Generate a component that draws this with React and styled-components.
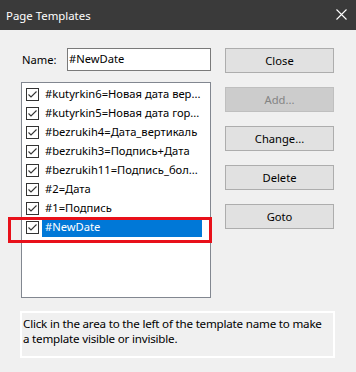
import React from "react"
import styled, { createGlobalStyle } from "styled-components"

const GlobalStyle = createGlobalStyle`
  html, body {
    margin: 0;
    padding: 0;
    background: #f0f0f0;
  }
  body {
    font-family: "Noto Sans", "Liberation Sans", sans-serif;
    font-size: 11.2px;
    color: #000;
  }
`

const templates = [
  "#kutyrkin6=Новая дата вер...",
  "#kutyrkin5=Новая дата гор...",
  "#bezrukih4=Дата_вертикаль",
  "#bezrukih3=Подпись+Дата",
  "#bezrukih11=Подпись_бол...",
  "#2=Дата",
  "#1=Подпись",
  "#NewDate",
]

const buttons = [
  { label: "Close" },
  { label: "Add...", disabled: true },
  { label: "Change..." },
  { label: "Delete" },
  { label: "Goto" },
]

const CheckIcon = () => (
  <svg width="13" height="13" viewBox="0 0 13 13">
    <rect x="0.5" y="0.5" width="12" height="12" fill="#fff" stroke="#333" />
    <path d="M2.5 6.5 L5 9 L10.5 3.5" fill="none" stroke="#333" strokeWidth="1.1" />
  </svg>
)

const CloseIcon = () => (
  <svg width="11" height="11" viewBox="0 0 11 11">
    <path d="M0.5 0.5 L10.5 10.5 M10.5 0.5 L0.5 10.5" stroke="#fff" strokeWidth="1.1" />
  </svg>
)

const App = () => (
  <Window>
    <GlobalStyle />
    <TitleBar>
      <span>Page Templates</span>
      <CloseIcon />
    </TitleBar>
    <Body>
      <Main>
        <LeftColumn>
          <NameRow>
            <label>Name:</label>
            <NameInput defaultValue="#NewDate" />
          </NameRow>
          <ListBox>
            {templates.map((name, i) => {
              const selected = i === templates.length - 1
              return (
                <Row key={name}>
                  <CheckIcon />
                  <RowText $selected={selected}>{name}</RowText>
                  {selected && <Marker />}
                </Row>
              )
            })}
          </ListBox>
        </LeftColumn>
        <ButtonColumn>
          {buttons.map((b) => (
            <Button key={b.label} disabled={b.disabled}>
              {b.label}
            </Button>
          ))}
        </ButtonColumn>
      </Main>
      <InfoBox>
        Click in the area to the left of the template name to make
        <br />
        a template visible or invisible.
      </InfoBox>
    </Body>
  </Window>
)

const Window = styled.div`
  width: 356px;
  height: 372px;
  display: flex;
  flex-direction: column;
  background: #f0f0f0;
  overflow: hidden;
`

const TitleBar = styled.div`
  height: 30px;
  flex-shrink: 0;
  background: #3a3a3a;
  color: #fff;
  display: flex;
  align-items: center;
  justify-content: space-between;
  padding: 0 9px 0 6px;
  font-size: 11.4px;

  svg {
    margin-top: -1px;
  }
`

const Body = styled.div`
  padding: 18px 0 0 21px;
  display: flex;
  flex-direction: column;
`

const Main = styled.div`
  display: flex;
  gap: 14px;
`

const LeftColumn = styled.div`
  width: 190px;
  display: flex;
  flex-direction: column;
  gap: 11px;
`

const NameRow = styled.div`
  display: flex;
  align-items: center;
  justify-content: space-between;
  height: 23px;

  label {
    padding-left: 1px;
  }
`

const NameInput = styled.input`
  box-sizing: border-box;
  width: 144px;
  height: 23px;
  border: 1px solid #7a7a7a;
  background: #fff;
  font: inherit;
  padding: 0 1px 2px;
  outline: none;
`

const ListBox = styled.div`
  box-sizing: border-box;
  height: 216px;
  border: 1px solid #828790;
  background: #fff;
  padding-top: 2px;
  display: flex;
  flex-direction: column;
`

const Row = styled.div`
  position: relative;
  height: 19px;
  display: flex;
  align-items: center;
  padding-left: 4px;
  gap: 3px;
`

const RowText = styled.span`
  height: 19px;
  line-height: 18px;
  padding-left: 3px;
  white-space: nowrap;
  ${({ $selected }) =>
    $selected &&
    `
    background: #0078d7;
    color: #fff;
    width: 157px;
  `}
`

const Marker = styled.div`
  position: absolute;
  left: -14px;
  top: -1px;
  width: 204px;
  height: 26px;
  box-sizing: border-box;
  border: 3px solid #e8101a;
  pointer-events: none;
`

const ButtonColumn = styled.div`
  display: flex;
  flex-direction: column;
  gap: 14px;
`

const Button = styled.button`
  box-sizing: border-box;
  width: 109px;
  height: 25px;
  border: 1px solid #adadad;
  background: #e1e1e1;
  font: inherit;
  color: #000;
  padding: 0 0 1px;

  &:disabled {
    background: #cccccc;
    border-color: #bfbfbf;
    color: #838383;
  }
`

const InfoBox = styled.div`
  box-sizing: border-box;
  margin: 13px 0 0 -1px;
  width: 315px;
  height: 47px;
  border: 2px solid #fff;
  padding: 3px 1px;
  line-height: 15px;
  font-size: 11.6px;
  letter-spacing: -0.2px;
  white-space: nowrap;
`

export default App
